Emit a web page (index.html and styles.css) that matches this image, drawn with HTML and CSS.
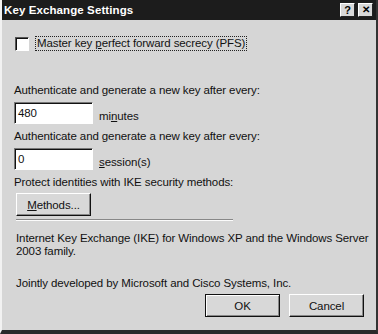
FILE: index.html
```html
<!DOCTYPE html>
<html lang="en">

<head>
    <meta charset="UTF-8">
    <title>Key Exchange Settings</title>
    <link rel="stylesheet" href="styles.css">
</head>

<body>

    <div class="dialog">
        <div class="title-bar">
            <span class="title">Key Exchange Settings</span>
            <div class="title-buttons">
                <span class="cap-btn">?</span>
                <span class="cap-btn close">&#x2715;</span>
            </div>
        </div>

        <div class="content">
            <div class="check-row">
                <span class="checkbox"></span>
                <span class="check-label">Master key <u>p</u>erfect forward secrecy (PFS)</span>
            </div>

            <div class="label first">Authenticate and generate a new key after every:</div>
            <div class="field-row">
                <div class="textbox">480</div>
                <span>mi<u>n</u>utes</span>
            </div>

            <div class="label">Authenticate and generate a new key after every:</div>
            <div class="field-row">
                <div class="textbox">0</div>
                <span><u>s</u>ession(s)</span>
            </div>

            <div class="label">Protect identities with IKE security methods:</div>
            <div class="btn methods"><u>M</u>ethods...</div>

            <div class="separator"></div>

            <p class="info">Internet Key Exchange (IKE) for Windows XP and the Windows Server 2003 family.</p>
            <p class="info credit">Jointly developed by Microsoft and Cisco Systems, Inc.</p>

            <div class="footer">
                <div class="btn default">OK</div>
                <div class="btn">Cancel</div>
            </div>
        </div>
    </div>

</body>

</html>
```

FILE: styles.css
```css
body {
    margin: 0;
    background: #333;
    font-family: "Liberation Sans", Arial, sans-serif;
    font-size: 11.5px;
    letter-spacing: -0.1px;
    color: #111;
}

/* window frame */
.dialog {
    width: 378px;
    height: 334px;
    box-sizing: border-box;
    background: #d6d6d6;
    border-left: 2px solid #f2f2f2;
    border-right: 2px solid #333;
    border-bottom: 4px solid #2a2a2a;
    display: flex;
    flex-direction: column;
}

.title-bar {
    height: 20px;
    background: #1c1c1c;
    display: flex;
    align-items: center;
    justify-content: space-between;
    padding: 0 3px 0 2px;
}

.title {
    color: #fff;
    font-weight: bold;
    font-size: 11.5px;
    letter-spacing: 0.1px;
}

.title-buttons {
    display: flex;
    gap: 3px;
}

.cap-btn {
    width: 15px;
    height: 14px;
    box-sizing: border-box;
    background: #d8d8d8;
    border: 1px solid;
    border-color: #fff #222 #222 #fff;
    font-weight: bold;
    font-size: 11px;
    line-height: 12px;
    text-align: center;
    color: #000;
}

.cap-btn.close {
    font-size: 10px;
}

.content {
    flex: 1;
    padding: 16px 0 0 12px;
    display: flex;
    flex-direction: column;
}

.check-row {
    display: flex;
    align-items: center;
    gap: 6px;
}

.checkbox {
    width: 12px;
    height: 12px;
    margin-left: 1px;
    background: #fff;
    border: 1px solid;
    border-color: #555 #fff #fff #555;
    box-shadow: inset 1px 1px 0 #111;
}

.check-label {
    border: 1px dotted #222;
    padding: 0 1px;
    line-height: 13px;
}

.label {
    margin-top: 5px;
    line-height: 14px;
}

.label.first {
    margin-top: 32px;
}

.field-row {
    display: flex;
    align-items: flex-end;
    gap: 6px;
    margin-top: 5px;
}

.field-row span {
    margin-bottom: 2px;
}

.textbox {
    width: 79px;
    height: 22px;
    box-sizing: border-box;
    background: #fff;
    border: 1px solid;
    border-color: #777 #fff #fff #777;
    box-shadow: inset 1px 1px 0 #111;
    padding: 3px 3px 0;
    line-height: 14px;
}

.btn {
    width: 75px;
    height: 23px;
    box-sizing: border-box;
    background: #d8d8d8;
    border: 1px solid;
    border-color: #fff #111 #111 #fff;
    box-shadow: inset -1px -1px 0 #888;
    display: flex;
    align-items: center;
    justify-content: center;
}

.btn.methods {
    margin-top: 4px;
    margin-left: 2px;
}

.separator {
    width: 217px;
    margin: 3px 0 0 2px;
    border-top: 1px solid #888;
    border-bottom: 1px solid #fbfbfb;
}

.info {
    margin: 11px 0 0 2px;
    width: 358px;
    line-height: 13px;
}

.info.credit {
    margin-top: 19px;
}

.footer {
    display: flex;
    justify-content: flex-end;
    gap: 9px;
    margin: 4px 12px 0 0;
}

.btn.default {
    border: 1px solid #111;
    box-shadow: inset 1px 1px 0 #fff, inset -1px -1px 0 #888;
}
```
